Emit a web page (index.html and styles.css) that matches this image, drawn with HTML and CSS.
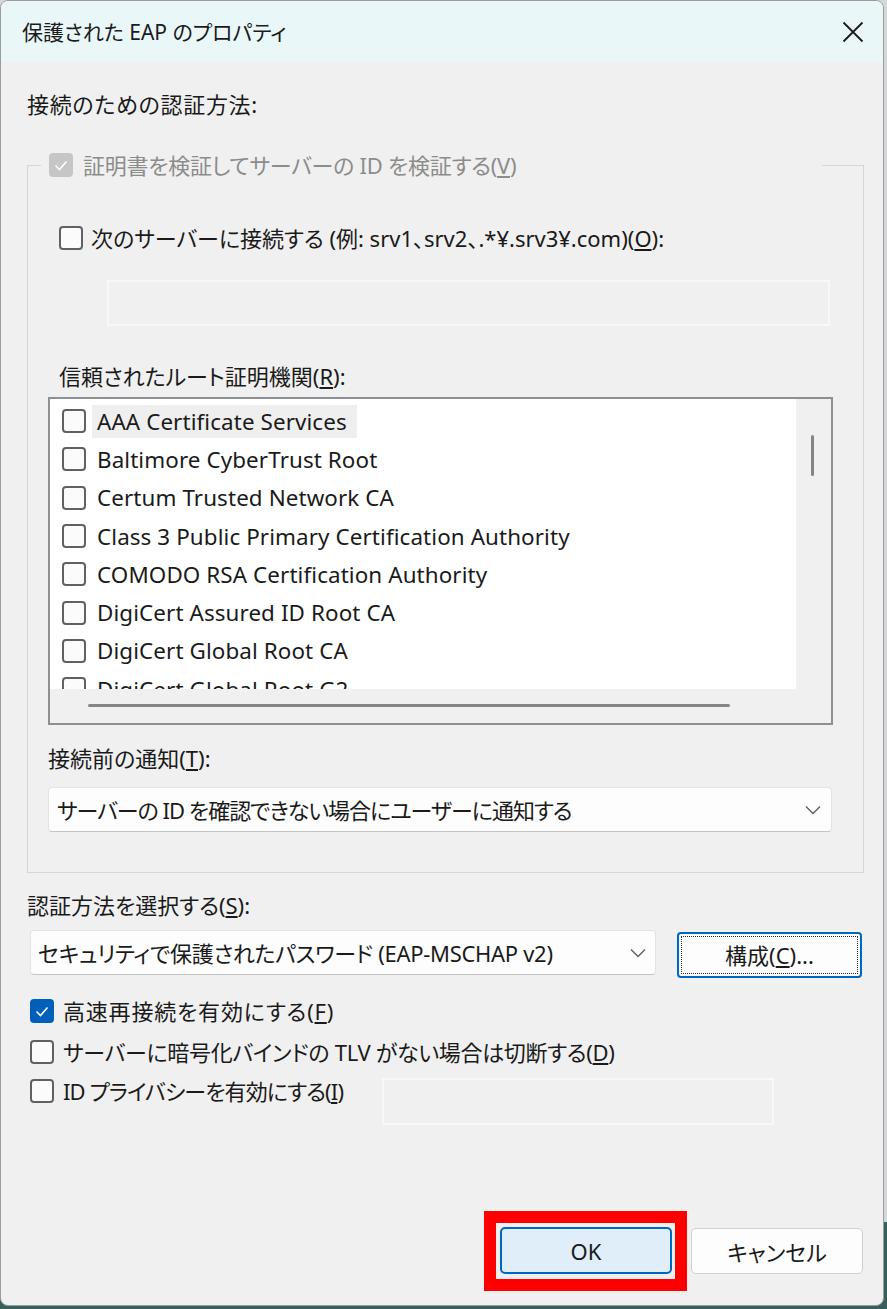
FILE: index.html
```html
<!DOCTYPE html>
<html lang="ja">
<head>
<meta charset="utf-8">
<title>保護された EAP のプロパティ</title>
<link rel="stylesheet" href="styles.css">
</head>
<body>
<div class="window">
  <div class="titlebar">
    <span class="title">保護された EAP のプロパティ</span>
    <span class="close"><svg width="22" height="22" viewBox="0 0 22 22"><path d="M1.5 1.5 L20.5 20.5 M20.5 1.5 L1.5 20.5" stroke="#1b1b1b" stroke-width="1.8" fill="none"/></svg></span>
  </div>
  <div class="content">
    <div class="label top-label">接続のための認証方法:</div>
    <fieldset class="group">
      <legend class="legend">
        <span class="cb cb-disabled"><svg width="24" height="24" viewBox="0 0 24 24"><path d="M6.5 12.5 L10.5 16.5 L17.5 8.5" stroke="#fff" stroke-width="1.6" fill="none"/></svg></span>
        <span class="dis-text">証明書を検証してサーバーの ID を検証する(<u>V</u>)</span>
      </legend>
      <div class="cbrow servers-row"><span class="cb"></span><span class="cbtext">次のサーバーに接続する (例: srv1、srv2、.*¥.srv3¥.com)(<u>O</u>):</span></div>
      <div class="textbox servers-box"></div>
      <div class="label ca-label">信頼されたルート証明機関(<u>R</u>):</div>
      <div class="listbox">
        <div class="list">
          <div class="item"><span class="cb"></span><span class="item-text hover">AAA Certificate Services</span></div>
          <div class="item"><span class="cb"></span><span class="item-text">Baltimore CyberTrust Root</span></div>
          <div class="item"><span class="cb"></span><span class="item-text">Certum Trusted Network CA</span></div>
          <div class="item"><span class="cb"></span><span class="item-text">Class 3 Public Primary Certification Authority</span></div>
          <div class="item"><span class="cb"></span><span class="item-text">COMODO RSA Certification Authority</span></div>
          <div class="item"><span class="cb"></span><span class="item-text">DigiCert Assured ID Root CA</span></div>
          <div class="item"><span class="cb"></span><span class="item-text">DigiCert Global Root CA</span></div>
          <div class="item"><span class="cb"></span><span class="item-text">DigiCert Global Root G2</span></div>
        </div>
        <div class="vscroll"><span class="vthumb"></span></div>
        <div class="hscroll"><span class="hthumb"></span></div>
        <div class="corner"></div>
      </div>
      <div class="label notify-label">接続前の通知(<u>T</u>):</div>
      <div class="combo notify-combo">
        <span class="combo-text notify-text">サーバーの ID を確認できない場合にユーザーに通知する</span>
        <svg class="chev" width="16" height="10" viewBox="0 0 16 10"><path d="M1 1.5 L8 8.5 L15 1.5" stroke="#5c5c5c" stroke-width="1.3" fill="none"/></svg>
      </div>
    </fieldset>
    <div class="label method-label">認証方法を選択する(<u>S</u>):</div>
    <div class="method-row">
      <div class="combo method-combo">
        <span class="combo-text method-text">セキュリティで保護されたパスワード (EAP-MSCHAP v2)</span>
        <svg class="chev" width="16" height="10" viewBox="0 0 16 10"><path d="M1 1.5 L8 8.5 L15 1.5" stroke="#5c5c5c" stroke-width="1.3" fill="none"/></svg>
      </div>
      <button class="btn btn-config"><span class="focus-ring">構成(<u>C</u>)...</span></button>
    </div>
    <div class="cbrow opt fast-row">
      <span class="cb cb-checked"><svg width="24" height="24" viewBox="0 0 24 24"><path d="M6.5 12.5 L10.5 16.5 L17.5 8.5" stroke="#fff" stroke-width="1.6" fill="none"/></svg></span>
      <span class="cbtext wide">高速再接続を有効にする(<u>F</u>)</span>
    </div>
    <div class="cbrow opt tlv-row"><span class="cb"></span><span class="cbtext tight">サーバーに暗号化バインドの TLV がない場合は切断する(<u>D</u>)</span></div>
    <div class="privacy-row">
      <div class="cbrow opt"><span class="cb"></span><span class="cbtext tighter">ID プライバシーを有効にする(<u>I</u>)</span></div>
      <div class="textbox privacy-box"></div>
    </div>
    <div class="footer">
      <div class="highlight"><button class="btn btn-ok">OK</button></div>
      <button class="btn btn-cancel">キャンセル</button>
    </div>
  </div>
</div>
</body>
</html>
```
FILE: styles.css
```css
html {
  background: linear-gradient(#d5d8d8 0, #d5d8d8 1222px, #36605e 1222px);
  min-height: 100%;
}
body {
  margin: 0;
  font-family: "Noto Sans", "Noto Sans CJK JP", sans-serif;
  color: #1a1a1a;
  font-feature-settings: "palt";
}
.window {
  width: 884px;
  height: 1306px;
  box-sizing: border-box;
  border: 1px solid #9c9c9c;
  border-radius: 8px;
  background: #f0f0f0;
  overflow: hidden;
}
.titlebar {
  height: 61px;
  background: #e9f7f8;
  display: flex;
  align-items: center;
  justify-content: space-between;
  padding: 0 19px 0 21px;
}
.title {
  font-size: 21px;
  line-height: 28px;
  color: #1b1b1b;
}
.close svg { display: block; }
.content {
  padding-left: 26px;
}
.label {
  font-size: 22px;
  line-height: 30px;
  height: 30px;
  white-space: nowrap;
}
.top-label { margin-top: 27px; letter-spacing: 0.7px; }
.group {
  margin: 31px 0 0 0;
  width: 837px;
  box-sizing: border-box;
  padding: 0 0 40px 0;
  border: 1px solid #d6d6d6;
  min-inline-size: 0;
}
.legend {
  margin-left: 13px;
  padding: 0 0 0 8px;
  width: 781px;
  height: 30px;
  box-sizing: border-box;
  display: flex;
  align-items: center;
  gap: 10px;
  font-size: 22px;
  line-height: 30px;
  white-space: nowrap;
}
.dis-text { color: #8c8c8c; letter-spacing: -0.25px; }
.cb {
  width: 24px;
  height: 24px;
  box-sizing: border-box;
  border: 2px solid #616161;
  border-radius: 4px;
  background: #fbfbfb;
  flex: none;
  display: block;
}
.cb svg { display: block; margin: -2px; }
.cb-disabled {
  border-color: #c6c6c6;
  background: #c6c6c6;
}
.cb-checked {
  border-color: #005fb8;
  background: #005fb8;
}
.cbrow {
  display: flex;
  align-items: center;
  height: 30px;
  gap: 8px;
  font-size: 22px;
  line-height: 30px;
  white-space: nowrap;
}
.servers-row { margin: 43px 0 0 31px; }
.textbox {
  box-sizing: border-box;
  border: 2px solid #f8f8f8;
  background: #f0f0f0;
}
.servers-box {
  margin: 27px 0 0 79px;
  width: 723px;
  height: 46px;
}
.ca-label { margin: 35px 0 0 31px; }
.listbox {
  margin: 6px 0 0 20px;
  width: 785px;
  height: 328px;
  box-sizing: border-box;
  border: 2px solid #8d8f93;
  background: #f0f0f0;
  display: grid;
  grid-template-columns: 746px 1fr;
  grid-template-rows: 290px 1fr;
}
.list {
  background: #fff;
  overflow: hidden;
  padding-top: 3px;
  box-sizing: border-box;
}
.item {
  height: 38.3px;
  display: flex;
  align-items: center;
  padding-left: 12px;
  font-size: 22.4px;
  white-space: nowrap;
}
.item-text {
  margin-left: 6px;
  padding: 0 5px;
  height: 33px;
  line-height: 33px;
  letter-spacing: 0.1px;
}
.item-text.hover { background: #efefef; padding-right: 10px; }
.vscroll {
  background: #f0f0f0;
}
.vthumb {
  display: block;
  width: 3px;
  height: 41px;
  margin: 36px 0 0 15px;
  background: #858585;
  border-radius: 2px;
}
.hscroll { background: #f0f0f0; }
.hthumb {
  display: block;
  height: 3px;
  width: 642px;
  margin: 15px 0 0 38px;
  background: #858585;
  border-radius: 2px;
}
.notify-label { margin: 18px 0 0 20px; }
.combo {
  box-sizing: border-box;
  background: #fdfdfd;
  border: 1px solid #e3e3e3;
  border-bottom-color: #c4c4c4;
  border-radius: 4px;
  display: flex;
  align-items: center;
  justify-content: space-between;
  font-size: 22px;
  white-space: nowrap;
}
.combo-text { line-height: 30px; }
.notify-text { letter-spacing: -1px; }
.method-text { letter-spacing: -0.3px; }
.notify-combo {
  margin: 14px 0 0 20px;
  width: 784px;
  height: 45px;
  padding: 0 10px 0 8px;
}
.method-label { margin-top: 17px; }
.method-row {
  margin-top: 10px;
  display: flex;
  align-items: flex-start;
}
.method-combo {
  margin-left: 3px;
  width: 626px;
  height: 45px;
  padding: 0 9px 0 7px;
}
.btn {
  font-family: inherit;
  font-feature-settings: "palt";
  color: #1a1a1a;
  font-size: 22px;
  box-sizing: border-box;
  margin: 0;
  cursor: default;
}
.btn-config {
  margin: 2px 0 0 21px;
  width: 185px;
  height: 46px;
  border: 2px solid #0067c0;
  border-radius: 4px;
  background: #fdfdfd;
  padding: 2px;
  display: flex;
}
.focus-ring {
  flex: 1;
  border: 1px dotted #2a2a2a;
  display: flex;
  align-items: center;
  justify-content: center;
  line-height: 30px;
}
.opt { margin-left: 3px; gap: 9px; }
.fast-row { margin-top: 18px; }
.tlv-row { margin-top: 11px; }
.wide { letter-spacing: 0.8px; }
.tight { letter-spacing: -0.3px; }
.tighter { letter-spacing: -0.9px; }
.privacy-row {
  margin-top: 9px;
  display: grid;
  grid-template-columns: 355px 392px;
  align-items: start;
}
.privacy-box {
  margin-top: 2px;
  height: 47px;
}
.footer {
  margin-top: 86px;
  display: flex;
  justify-content: flex-end;
  align-items: center;
  gap: 4px;
  padding-right: 20px;
}
.highlight {
  border: 12px solid #ff0000;
  padding: 4px 3px 5px 4px;
  background: #f0f0f0;
}
.btn-ok {
  display: block;
  width: 172px;
  height: 47px;
  background: #e0eef9;
  border: 2px solid #0067c0;
  border-radius: 5px;
}
.btn-cancel {
  width: 172px;
  height: 46px;
  background: #fdfdfd;
  border: 1px solid #d0d0d0;
  border-radius: 5px;
}
```
